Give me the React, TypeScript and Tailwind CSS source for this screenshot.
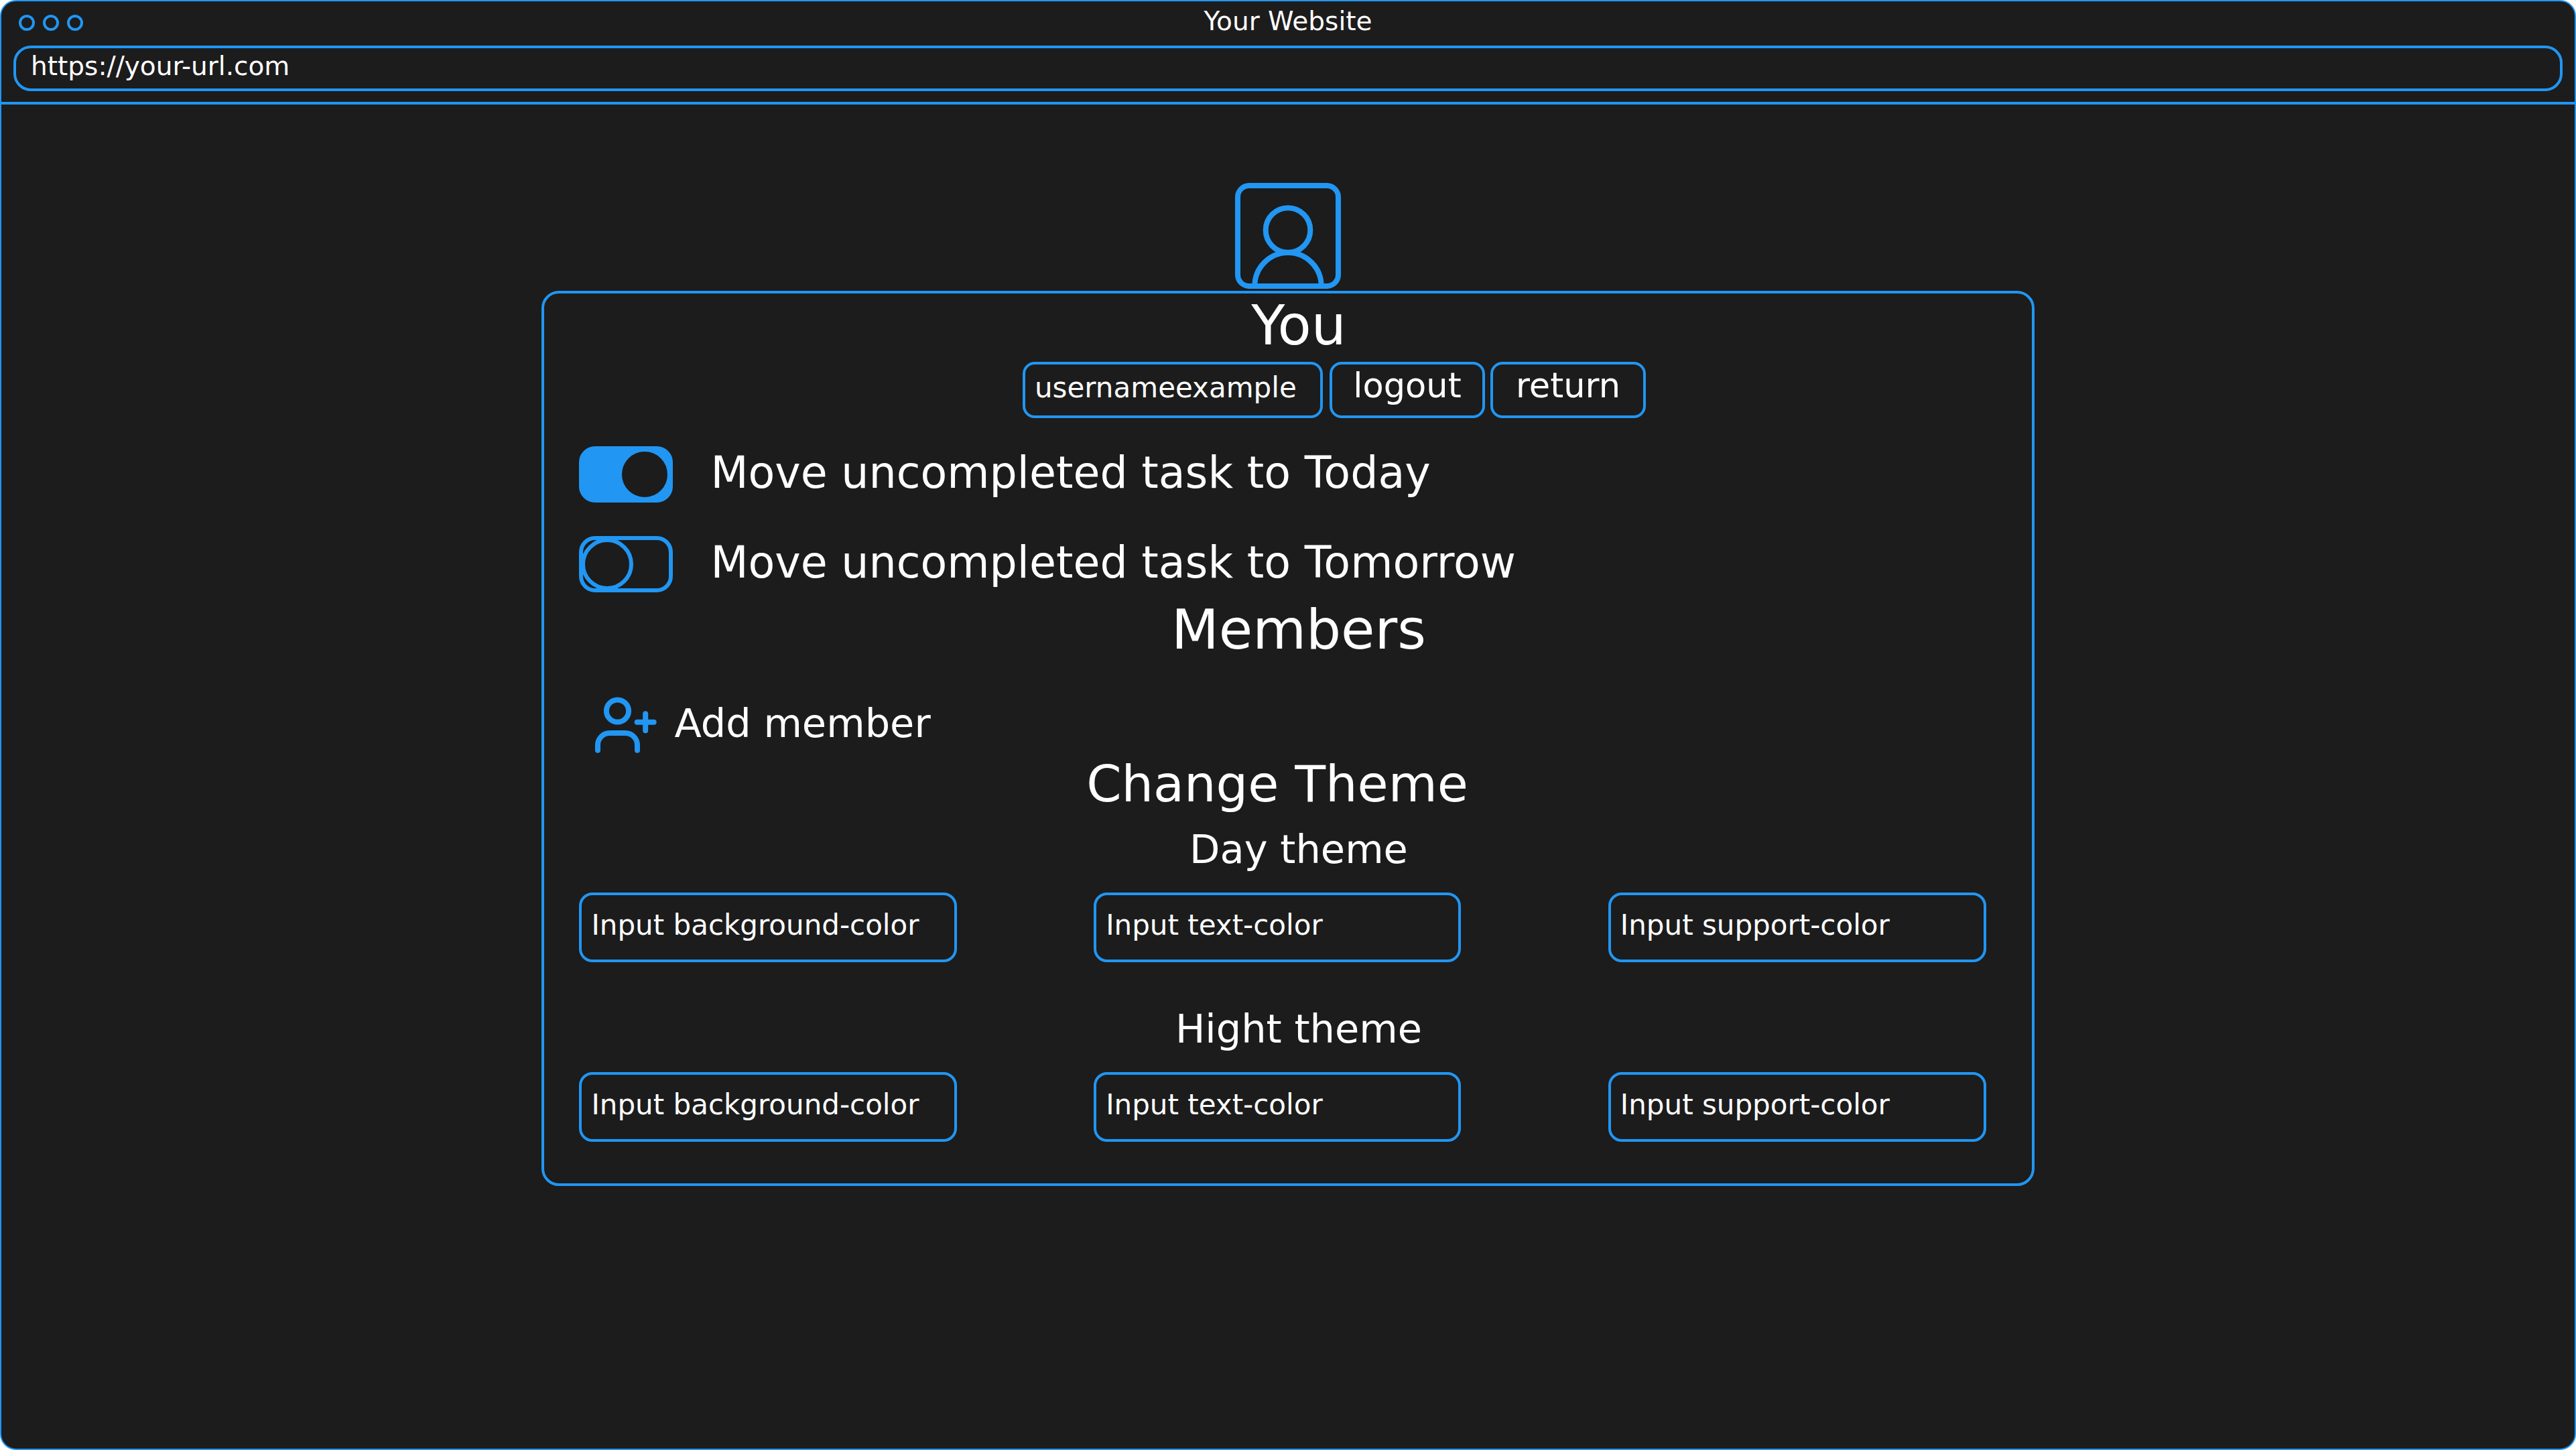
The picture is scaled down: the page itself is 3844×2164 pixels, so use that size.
import React from "react";

const colorFields = [
  { name: "background-color", className: "" },
  { name: "text-color", className: "mr-4" },
  { name: "support-color", className: "" },
];

function WindowBar() {
  return (
    <header className="border-b-4 border-[#2196f3] px-[18px] pb-4">
      <div className="grid h-16 grid-cols-3 items-center">
        <div className="flex gap-3 pl-2">
          <span className="size-6 rounded-full border-4 border-[#2196f3]" />
          <span className="size-6 rounded-full border-4 border-[#2196f3]" />
          <span className="size-6 rounded-full border-4 border-[#2196f3]" />
        </div>
        <p className="pb-1 text-center text-[39px] leading-[44px]">Your Website</p>
      </div>
      <input
        type="text"
        aria-label="Address"
        defaultValue="https://your-url.com"
        className="mt-0.5 block h-[68px] w-full rounded-[26px] border-4 border-[#2196f3] bg-transparent px-[22px] pb-2 text-[39px] outline-none"
      />
    </header>
  );
}

function Avatar() {
  return (
    <svg
      viewBox="0 0 158 158"
      className="size-[158px]"
      fill="none"
      stroke="#2196f3"
      strokeWidth="8"
      role="img"
      aria-label="Profile picture"
    >
      <rect x="4" y="4" width="150" height="150" rx="17" />
      <circle cx="79" cy="70.5" r="33.3" />
      <path d="M29.3 154a49.7 50 0 0 1 99.4 0" />
    </svg>
  );
}

function AddMemberIcon() {
  return (
    <svg
      viewBox="0 0 92 84"
      className="h-[84px] w-[92px]"
      fill="none"
      stroke="#2196f3"
      strokeWidth="8"
      strokeLinecap="round"
      aria-hidden="true"
    >
      <circle cx="33.5" cy="21" r="16.6" />
      <path d="M4 79.7v-7.7a18 18 0 0 1 18-18h23a18 18 0 0 1 18 18v7.7" />
      <path d="M75.2 25.3v25M62.7 37.8h25" />
    </svg>
  );
}

function Toggle({ label, on }: { label: string; on?: boolean }) {
  return (
    <label className="flex cursor-pointer items-center">
      <span className="relative h-[84px] w-[140px] shrink-0">
        <input
          type="checkbox"
          role="switch"
          defaultChecked={on}
          className="peer block h-full w-full cursor-pointer appearance-none rounded-[24px] border-6 border-[#2196f3] checked:bg-[#2196f3]"
        />
        <span className="pointer-events-none absolute top-[3px] left-[3px] size-[78px] rounded-full border-6 border-[#2196f3] peer-checked:left-[59px] peer-checked:border-5 peer-checked:bg-[#1c1c1c]" />
      </span>
      <span className="pb-1 pl-14 text-[65px] leading-[78px]">{label}</span>
    </label>
  );
}

function ThemeFields({ title }: { title: string }) {
  return (
    <section>
      <h3 className="pl-12 text-center text-[59px] leading-[80px]">{title}</h3>
      <div className="mt-6 grid grid-cols-3 gap-[204px]">
        {colorFields.map((field) => (
          <div key={field.name} className={field.className}>
            <input
              type="text"
              aria-label={`${title} ${field.name}`}
              placeholder={`Input ${field.name}`}
              className="block h-[104px] w-full rounded-[20px] border-4 border-[#2196f3] bg-transparent px-3.5 pb-2 text-[42px] outline-none placeholder:text-white"
            />
          </div>
        ))}
      </div>
    </section>
  );
}

export default function App() {
  return (
    <div className="bg-white">
      <div className="flex min-h-screen flex-col rounded-[24px] border-2 border-[#2196f3] bg-[#1c1c1c] font-['DejaVu_Sans',sans-serif] text-white">
        <WindowBar />
        <main className="flex flex-col items-center pt-[117px]">
          <Avatar />
          <div className="mt-[3px] w-[58%] rounded-[26px] border-4 border-[#2196f3] pr-[68px] pb-[62px] pl-[52px]">
            <h1 className="pl-12 text-center text-[82px] leading-[96px]">You</h1>
            <div className="mt-1.5 flex justify-center gap-2 pl-[154px]">
              <input
                type="text"
                aria-label="Username"
                defaultValue="usernameexample"
                className="mr-0.5 h-[84px] w-[448px] rounded-[18px] border-4 border-[#2196f3] bg-transparent px-3.5 pb-2 text-[42px] outline-none"
              />
              <button
                type="button"
                className="h-[84px] w-[232px] rounded-[18px] border-4 border-[#2196f3] pb-3 text-[51px] leading-[58px]"
              >
                logout
              </button>
              <button
                type="button"
                className="h-[84px] w-[232px] rounded-[18px] border-4 border-[#2196f3] pb-3 text-[51px] leading-[58px]"
              >
                return
              </button>
            </div>
            <div className="mt-[42px] flex flex-col items-start gap-[50px]">
              <Toggle label="Move uncompleted task to Today" on />
              <Toggle label="Move uncompleted task to Tomorrow" />
            </div>
            <h2 className="mt-2 pl-12 text-center text-[82px] leading-[96px]">Members</h2>
            <button type="button" className="mt-[52px] ml-6 flex items-center gap-[26px]">
              <AddMemberIcon />
              <span className="pb-1 text-[59px] leading-[72px]">Add member</span>
            </button>
            <h2 className="pr-4 text-center text-[75px] leading-[92px]">Change Theme</h2>
            <div className="mt-3 flex flex-col gap-[60px]">
              <ThemeFields title="Day theme" />
              <ThemeFields title="Hight theme" />
            </div>
          </div>
        </main>
      </div>
    </div>
  );
}
